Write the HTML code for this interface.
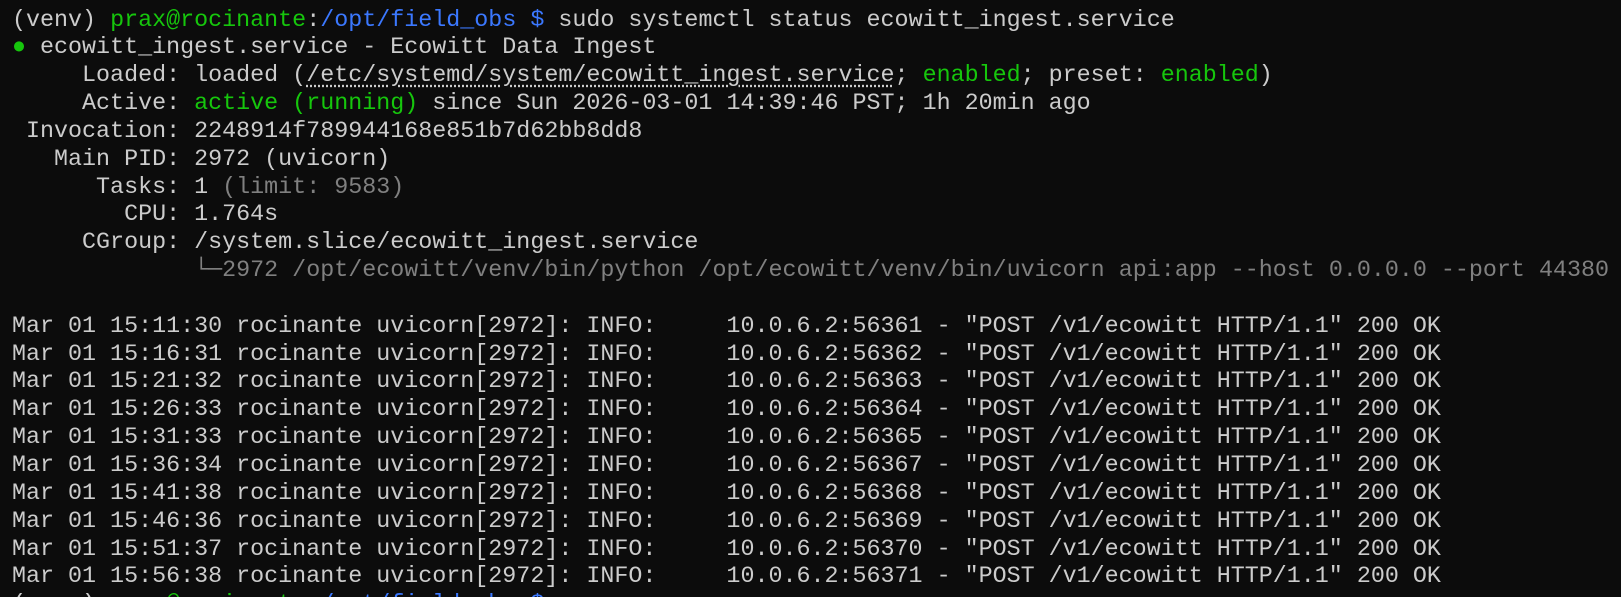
<!DOCTYPE html>
<html><head><meta charset="utf-8"><style>
html,body{margin:0;padding:0;background:#0c0c0c;width:1621px;height:597px;overflow:hidden;position:relative}
.l{position:absolute;left:12px;height:27px;line-height:27px;font-family:"Liberation Mono","DejaVu Sans Mono",monospace;font-size:23.35px;color:#cccccc;white-space:pre}
.g{color:#16c60c}.b{color:#3b78ff}.d{color:#808080}
.u{text-decoration:underline dotted;text-underline-offset:4px}
</style></head><body>
<div class="l" style="top:7.6px">(venv) <span class="g">prax@rocinante</span>:<span class="b">/opt/field_obs $</span> sudo systemctl status ecowitt_ingest.service</div>
<div class="l" style="top:35.4px"><span class="g">●</span> ecowitt_ingest.service - Ecowitt Data Ingest</div>
<div class="l" style="top:63.3px">     Loaded: loaded (<span class="u">/etc/systemd/system/ecowitt_ingest.service</span>; <span class="g">enabled</span>; preset: <span class="g">enabled</span>)</div>
<div class="l" style="top:91.1px">     Active: <span class="g">active (running)</span> since Sun 2026-03-01 14:39:46 PST; 1h 20min ago</div>
<div class="l" style="top:118.9px"> Invocation: 2248914f789944168e851b7d62bb8dd8</div>
<div class="l" style="top:146.8px">   Main PID: 2972 (uvicorn)</div>
<div class="l" style="top:174.6px">      Tasks: 1 <span class="d">(limit: 9583)</span></div>
<div class="l" style="top:202.4px">        CPU: 1.764s</div>
<div class="l" style="top:230.2px">     CGroup: /system.slice/ecowitt_ingest.service</div>
<div class="l" style="top:258.1px">             <span class="d">└─2972 /opt/ecowitt/venv/bin/python /opt/ecowitt/venv/bin/uvicorn api:app --host 0.0.0.0 --port 44380</span></div>
<div class="l" style="top:313.7px">Mar 01 15:11:30 rocinante uvicorn[2972]: INFO:     10.0.6.2:56361 - "POST /v1/ecowitt HTTP/1.1" 200 OK</div>
<div class="l" style="top:341.6px">Mar 01 15:16:31 rocinante uvicorn[2972]: INFO:     10.0.6.2:56362 - "POST /v1/ecowitt HTTP/1.1" 200 OK</div>
<div class="l" style="top:369.4px">Mar 01 15:21:32 rocinante uvicorn[2972]: INFO:     10.0.6.2:56363 - "POST /v1/ecowitt HTTP/1.1" 200 OK</div>
<div class="l" style="top:397.2px">Mar 01 15:26:33 rocinante uvicorn[2972]: INFO:     10.0.6.2:56364 - "POST /v1/ecowitt HTTP/1.1" 200 OK</div>
<div class="l" style="top:425.2px">Mar 01 15:31:33 rocinante uvicorn[2972]: INFO:     10.0.6.2:56365 - "POST /v1/ecowitt HTTP/1.1" 200 OK</div>
<div class="l" style="top:453.1px">Mar 01 15:36:34 rocinante uvicorn[2972]: INFO:     10.0.6.2:56367 - "POST /v1/ecowitt HTTP/1.1" 200 OK</div>
<div class="l" style="top:480.9px">Mar 01 15:41:38 rocinante uvicorn[2972]: INFO:     10.0.6.2:56368 - "POST /v1/ecowitt HTTP/1.1" 200 OK</div>
<div class="l" style="top:508.7px">Mar 01 15:46:36 rocinante uvicorn[2972]: INFO:     10.0.6.2:56369 - "POST /v1/ecowitt HTTP/1.1" 200 OK</div>
<div class="l" style="top:536.6px">Mar 01 15:51:37 rocinante uvicorn[2972]: INFO:     10.0.6.2:56370 - "POST /v1/ecowitt HTTP/1.1" 200 OK</div>
<div class="l" style="top:564.4px">Mar 01 15:56:38 rocinante uvicorn[2972]: INFO:     10.0.6.2:56371 - "POST /v1/ecowitt HTTP/1.1" 200 OK</div>
<div class="l" style="top:592.3px">(venv) <span class="g">prax@rocinante</span>:<span class="b">/opt/field_obs $</span></div>
</body></html>
